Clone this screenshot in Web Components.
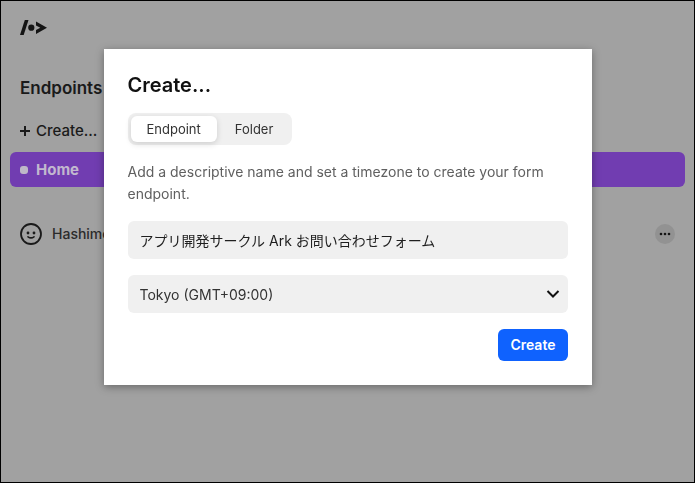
<!DOCTYPE html>
<html lang="en">
<head>
<meta charset="utf-8">
<meta name="viewport" content="width=device-width, initial-scale=1">
<title>Endpoints</title>
<style>
html, body { height: 100%; }
body { margin: 0; font-family: Inter, "Noto Sans CJK JP", sans-serif; font-size: 14px; color: #1a1a1a; background: #a1a1a1; }
</style>
</head>
<body>
<app-page>
  <brand-logo slot="logo"></brand-logo>
  <endpoint-list slot="main">
    <folder-row>Home</folder-row>
    <member-row>Hashimoto</member-row>
  </endpoint-list>
  <create-dialog slot="overlay">
    <tab-switch slot="tabs" labels="Endpoint,Folder"></tab-switch>
    <text-field slot="field" label="Name" value="アプリ開発サークル Ark お問い合わせフォーム"></text-field>
    <zone-select slot="field" label="Timezone">Tokyo (GMT+09:00)</zone-select>
    <primary-button slot="action">Create</primary-button>
  </create-dialog>
</app-page>
<script>
const define = (name, html, setup) => customElements.define(name, class extends HTMLElement {
  connectedCallback() {
    if (this.shadowRoot) return;
    const root = this.attachShadow({ mode: "open" });
    root.innerHTML = "<style>*{box-sizing:border-box}button,input,select{font:inherit;color:inherit;margin:0}svg{display:block}</style>" + html;
    if (setup) setup(this, root);
  }
});

define("app-page", `
<style>
:host { display: flow-root; box-sizing: border-box; min-height: 100%; border: 1px solid #000; background: #a1a1a1; }
header { padding: 18px 19px 0; }
main { padding: 41px 9px 0; }
</style>
<header><slot name="logo"></slot></header>
<main><slot name="main"></slot></main>
<slot name="overlay"></slot>`);

define("brand-logo", `
<style>:host { display: block; color: #141414; }</style>
<svg width="28" height="18" viewBox="0 0 28 18" role="img" aria-label="Logo" fill="currentColor">
<path d="M4.800 1H8.500L3.700 16H0Z"/><circle cx="11.300" cy="8.700" r="3.100"/><path d="M16 2.500L27 8.700L16 15V10.900L20.300 8.700L16 6.600Z"/>
</svg>`);

define("endpoint-list", `
<style>
:host { display: block; }
h1 { margin: 0; padding-left: 10px; font-size: 17px; line-height: 20px; font-weight: 600; }
button { display: flex; align-items: center; gap: 6px; margin: 23px 0 11px; padding: 0 10px; border: 0; background: none; font-size: 15px; line-height: 20px; font-weight: 500; }
</style>
<h1>Endpoints</h1>
<button type="button"><svg width="10" height="10" viewBox="0 0 10 10" stroke="currentColor" stroke-width="2" aria-hidden="true"><path d="M5 0V10M0 5H10"/></svg>Create...</button>
<slot></slot>`);

define("folder-row", `
<style>
:host { display: flex; align-items: center; gap: 8px; box-sizing: border-box; height: 35px; padding: 0 10px; border-radius: 6px; background: #713db1; color: #c2b8cf; font-size: 15px; font-weight: 700; }
i { width: 8px; height: 8px; border-radius: 3px; background: #bfb8c8; }
</style>
<i></i><span><slot></slot></span>`);

define("member-row", `
<style>
:host { display: flex; align-items: center; gap: 10px; padding: 0 10px; margin-top: 35px; color: #2b2b2b; font-weight: 500; }
span { flex: 1; line-height: 24px; }
button { display: grid; place-items: center; width: 20px; height: 20px; padding: 0; border: 0; border-radius: 50%; background: #929292; color: #141414; }
</style>
<svg width="22" height="22" viewBox="0 0 22 22" fill="none" stroke="#1a1a1a" aria-hidden="true"><circle cx="11" cy="11" r="10" stroke-width="1.800"/><path d="M8 13.800Q11 16 14 13.800" stroke-width="1.600" stroke-linecap="round"/><g fill="#1a1a1a" stroke="none"><circle cx="8" cy="10" r="1.400"/><circle cx="14" cy="10" r="1.400"/></g></svg>
<span><slot></slot></span>
<button type="button" aria-label="More"><svg width="12" height="4" viewBox="0 0 12 4" fill="currentColor"><circle cx="2" cy="2" r="1.300"/><circle cx="6" cy="2" r="1.300"/><circle cx="10" cy="2" r="1.300"/></svg></button>`);

define("create-dialog", `
<style>
:host { position: fixed; inset: 0; display: flex; align-items: flex-start; justify-content: center; padding: 49px 16px 16px; }
section { display: flex; flex-direction: column; gap: 16px; width: 100%; max-width: 488px; padding: 24px; background: #fff; box-shadow: 0 2px 8px rgba(0,0,0,.35); }
h2 { margin: 0; font-size: 20px; line-height: 24px; font-weight: 600; color: #111; }
p { margin: 0; font-size: 14px; line-height: 22px; color: #606060; }
footer { display: flex; justify-content: flex-end; }
</style>
<section role="dialog" aria-labelledby="title">
<h2 id="title">Create...</h2>
<slot name="tabs"></slot>
<p>Add a descriptive name and set a timezone to create your form endpoint.</p>
<slot name="field"></slot>
<footer><slot name="action"></slot></footer>
</section>`);

define("tab-switch", `
<style>
:host { display: flex; gap: 2px; align-self: flex-start; padding: 3px; border-radius: 8px; background: #f0f0f0; color: #333; }
button { height: 26px; padding: 0 16px; border: 0; border-radius: 6px; background: none; font-size: 13px; }
button[aria-selected=true] { background: #fff; box-shadow: 0 2px 6px rgba(0,0,0,.14); }
</style>`, (host, root) => {
  host.setAttribute("role", "tablist");
  host.getAttribute("labels").split(",").forEach((label, i) => {
    const tab = document.createElement("button");
    tab.type = "button";
    tab.setAttribute("role", "tab");
    tab.setAttribute("aria-selected", String(i === 0));
    tab.textContent = label;
    tab.onclick = () => root.querySelectorAll("button").forEach(b => b.setAttribute("aria-selected", String(b === tab)));
    root.append(tab);
  });
});

define("text-field", `
<style>
:host { display: block; }
input { display: block; width: 100%; height: 38px; padding: 0 12px; border: 0; border-radius: 6px; background: #f0f0f0; color: #1f1f1f; font-size: 14px; }
</style>
<input type="text">`, (host, root) => {
  const input = root.querySelector("input");
  input.value = host.getAttribute("value");
  input.setAttribute("aria-label", host.getAttribute("label"));
});

define("zone-select", `
<style>
:host { display: grid; align-items: center; }
select, svg { grid-area: 1 / 1; }
select { width: 100%; height: 38px; padding: 0 32px 0 12px; border: 0; border-radius: 6px; appearance: none; background: #f0f0f0; color: #333; font-size: 14px; }
svg { justify-self: end; margin-right: 8px; pointer-events: none; }
</style>
<select></select>
<svg width="14" height="10" viewBox="0 0 14 10" fill="none" stroke="#111" stroke-width="2" aria-hidden="true"><path d="M1.500 2L7 7.500L12.500 2"/></svg>`, (host, root) => {
  const select = root.querySelector("select");
  select.setAttribute("aria-label", host.getAttribute("label"));
  select.add(new Option(host.textContent.trim()));
});

define("primary-button", `
<style>
:host { display: block; }
button { height: 32px; padding: 0 12px; border: 0; border-radius: 6px; background: #0f62fe; color: #fff; font-size: 14px; line-height: 20px; font-weight: 600; }
</style>
<button type="button"><slot></slot></button>`);
</script>
</body>
</html>
